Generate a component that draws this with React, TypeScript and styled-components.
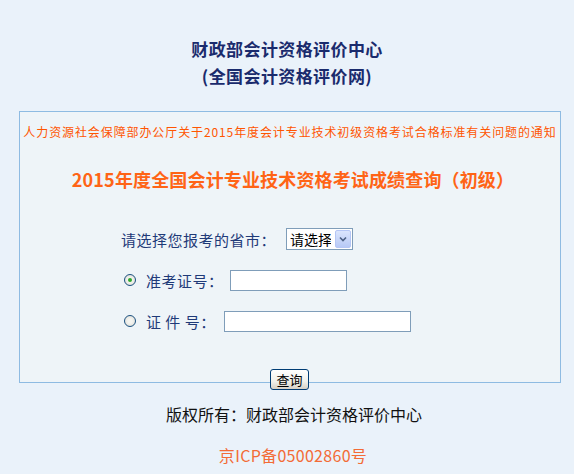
import styled, { createGlobalStyle } from 'styled-components'

const GlobalStyle = createGlobalStyle`
  html, body {
    margin: 0;
    padding: 0;
    background: #eaf2fa;
  }
  body {
    font-family: "Noto Sans CJK SC", "Liberation Sans", sans-serif;
  }
`

const Page = styled.div`
  width: 574px;
  height: 474px;
  overflow: hidden;
  display: flex;
  flex-direction: column;
  align-items: center;
`

const Title = styled.h1`
  margin: 35px 0 0;
  font-size: 17px;
  line-height: 27px;
  font-weight: bold;
  color: #1a2b6d;
  text-align: center;
  letter-spacing: 0.4px;
`

const Panel = styled.div`
  box-sizing: border-box;
  width: 542px;
  height: 272px;
  margin-top: 22px;
  margin-left: 6px;
  border: 1px solid #8ebbe2;
  background: #eef4f8;
  display: flex;
  flex-direction: column;
  align-items: center;
`

const Notice = styled.a`
  margin-top: 11px;
  font-size: 12px;
  line-height: 18px;
  letter-spacing: 0.9px;
  color: #ff5500;
  text-decoration: none;
  white-space: nowrap;
`

const Heading = styled.h2`
  margin: 25px 0 0 6px;
  font-size: 18px;
  line-height: 26px;
  font-weight: bold;
  color: #ff6416;
  letter-spacing: 0.15px;
`

const Form = styled.div`
  align-self: flex-start;
  margin: 36px 0 0 101px;
  display: flex;
  flex-direction: column;
  gap: 19px;
`

const Row = styled.div<{ $indent?: number }>`
  display: flex;
  align-items: center;
  height: 22px;
  padding-left: ${(p) => p.$indent ?? 0}px;
`

const Label = styled.span<{ $gap?: number }>`
  font-size: 15px;
  color: #1f3a78;
  white-space: pre;
  letter-spacing: 0.5px;
  margin-right: ${(p) => p.$gap ?? 8}px;
`

const SelectBox = styled.div`
  display: flex;
  align-items: stretch;
  height: 20px;
  border: 1px solid #7f9db9;
  background: #fff;
`

const SelectField = styled.select`
  appearance: none;
  border: none;
  outline: none;
  background: transparent;
  font-family: "Noto Sans CJK SC", sans-serif;
  font-size: 14px;
  color: #000;
  padding: 0 3px;
  width: 47px;
`

const SelectArrow = styled.span`
  width: 14px;
  margin: 1px;
  border: 1px solid #b5c6f5;
  border-radius: 2px;
  background: linear-gradient(#dbe5fd, #b7c9f6);
  display: flex;
  align-items: center;
  justify-content: center;
`

const Radio = styled.span<{ $checked?: boolean }>`
  box-sizing: border-box;
  width: 12px;
  height: 12px;
  border-radius: 50%;
  border: 1px solid #1c5180;
  background: radial-gradient(circle, #f4f4f0 30%, #d8d8d2 100%);
  display: flex;
  align-items: center;
  justify-content: center;
  margin-right: 10px;

  &::after {
    content: '';
    width: 4px;
    height: 4px;
    border-radius: 50%;
    background: ${(p) => (p.$checked ? '#2ea82e' : 'transparent')};
  }
`

const TextInput = styled.input<{ $width: number }>`
  box-sizing: border-box;
  width: ${(p) => p.$width}px;
  height: 21px;
  border: 1px solid #7f9db9;
  background: #fff;
  outline: none;
`

const QueryButton = styled.button`
  margin-top: -14px;
  margin-left: 5px;
  height: 21px;
  padding: 0 5px;
  border: 1px solid #003c74;
  border-radius: 3px;
  background: linear-gradient(#ffffff, #f0f0ea 60%, #d6d0c5);
  font-family: "Noto Sans CJK SC", sans-serif;
  font-size: 13px;
  line-height: 17px;
  color: #000;
  cursor: pointer;
`

const Copyright = styled.p`
  margin: 12px 0 0 14px;
  font-size: 16px;
  line-height: 24px;
  color: #111;
`

const Icp = styled.a`
  margin-top: 17px;
  margin-left: 12px;
  font-size: 16px;
  line-height: 24px;
  letter-spacing: 0.3px;
  color: #f36b36;
  text-decoration: none;
`

export default function App() {
  return (
    <Page>
      <GlobalStyle />
      <Title>
        财政部会计资格评价中心
        <br />
        (全国会计资格评价网)
      </Title>
      <Panel>
        <Notice href="#">人力资源社会保障部办公厅关于2015年度会计专业技术初级资格考试合格标准有关问题的通知</Notice>
        <Heading>2015年度全国会计专业技术资格考试成绩查询（初级）</Heading>
        <Form>
          <Row>
            <Label $gap={10}>请选择您报考的省市：</Label>
            <SelectBox>
              <SelectField defaultValue="">
                <option value="">请选择</option>
              </SelectField>
              <SelectArrow>
                <svg width="8" height="6" viewBox="0 0 8 6">
                  <path d="M1 1.5 L4 4.5 L7 1.5" fill="none" stroke="#4d6185" strokeWidth="1.6" />
                </svg>
              </SelectArrow>
            </SelectBox>
          </Row>
          <Row $indent={3}>
            <Radio $checked />
            <Label $gap={6}>准考证号：</Label>
            <TextInput $width={117} />
          </Row>
          <Row $indent={3}>
            <Radio />
            <Label $gap={8}>证 件 号：</Label>
            <TextInput $width={187} />
          </Row>
        </Form>
      </Panel>
      <QueryButton>查询</QueryButton>
      <Copyright>版权所有：财政部会计资格评价中心</Copyright>
      <Icp href="#">京ICP备05002860号</Icp>
    </Page>
  )
}
